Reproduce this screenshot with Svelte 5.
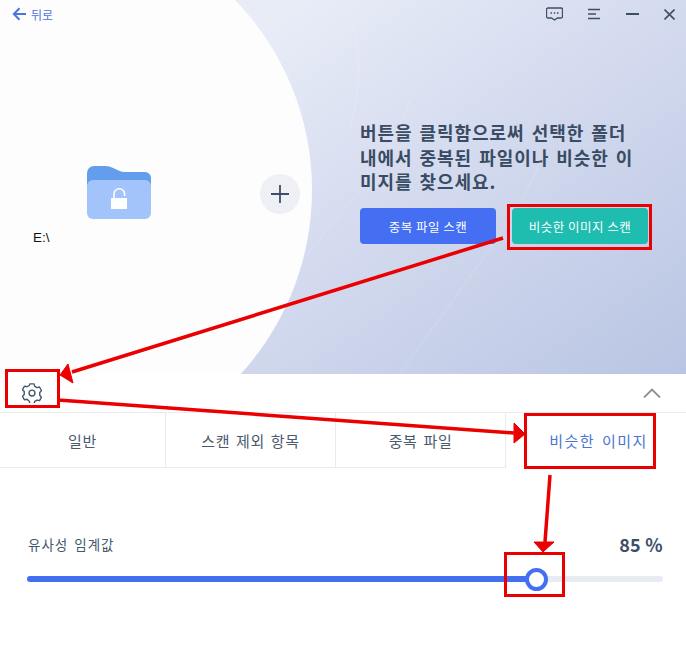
<script>
  const tabs = [
    { label: '일반', active: false },
    { label: '스캔 제외 항목', active: false },
    { label: '중복 파일', active: false },
    { label: '비슷한 이미지', active: true }
  ];
  const percent = 85;
  const sliderPosition = 80.05;
</script>

<div class="page">
  <section class="hero">
    <div class="circle"></div>
    <svg class="streaks" viewBox="0 0 686 374" fill="none" stroke="#ffffff" stroke-opacity="0.16">
      <path d="M305 258 C345 205 385 170 410 100" />
      <path d="M400 374 C450 300 520 220 545 150" />
      <path d="M345 0 C365 50 360 90 350 130" />
    </svg>

    <header class="topbar">
      <div class="back">
        <svg width="15" height="14" viewBox="0 0 15 14" fill="none" stroke="#4a75e0" stroke-width="2">
          <path d="M14 7H2M7.500 1.200 1.800 7l5.700 5.800" />
        </svg>
        <span>뒤로</span>
      </div>
      <div class="actions">
        <svg width="17" height="14" viewBox="0 0 17 14" fill="none" stroke="#3d4f66" stroke-width="1.300">
          <path d="M2 1h13a1.500 1.500 0 0 1 1.500 1.500v7A1.500 1.500 0 0 1 15 11h-3.500l-3 2-3-2H2A1.500 1.500 0 0 1 .5 9.500v-7A1.500 1.500 0 0 1 2 1z" />
          <path d="M4.500 6H6M7.800 6h1.500M11 6h1.500" stroke-width="1.600" />
        </svg>
        <svg width="13" height="12" viewBox="0 0 13 12" fill="none" stroke="#3d4f66" stroke-width="1.500">
          <path d="M0 1.500h12M0 6h8M0 10.500h12" />
        </svg>
        <svg width="13" height="12" viewBox="0 0 13 12" fill="none" stroke="#3d4f66" stroke-width="2">
          <path d="M0 6h13" />
        </svg>
        <svg width="11" height="11" viewBox="0 0 11 11" fill="none" stroke="#3d4f66" stroke-width="1.600">
          <path d="M.5.500l10 10M10.500.500l-10 10" />
        </svg>
      </div>
    </header>

    <div class="hero-body">
      <div class="pickers">
        <div class="folder-card">
          <svg class="folder" width="64" height="54" viewBox="0 0 64 54">
            <path d="M0 8a7 7 0 0 1 7-7h11c9 0 12 6 20 6h20a6 6 0 0 1 6 6v14H0z" fill="#659ded" />
            <path d="M6 15h52a6 6 0 0 1 6 6v27a6 6 0 0 1-6 6H6a6 6 0 0 1-6-6V21a6 6 0 0 1 6-6z" fill="#a3c4fa" />
            <rect x="24" y="33" width="16" height="11" fill="#fff" />
            <path d="M27 33v-4a5.300 5.300 0 0 1 10.600 0v2" fill="none" stroke="#fff" stroke-width="1.600" />
          </svg>
          <span class="drive">E:\</span>
        </div>
        <button class="add" aria-label="추가">
          <svg width="18" height="18" viewBox="0 0 18 18" fill="none" stroke="#3d4f66" stroke-width="1.800">
            <path d="M9 0v18M0 9h18" />
          </svg>
        </button>
      </div>

      <div class="intro">
        <h1>버튼을 클릭함으로써 선택한 폴더<br />내에서 중복된 파일이나 비슷한 이<br />미지를 찾으세요.</h1>
        <div class="buttons">
          <button class="scan blue">중복 파일 스캔</button>
          <button class="scan teal">비슷한 이미지 스캔</button>
        </div>
      </div>
    </div>
  </section>

  <section class="settings">
    <div class="settings-bar">
      <svg width="20" height="20" viewBox="0 0 24 24" fill="none" stroke="#46586e" stroke-width="1.700" stroke-linejoin="round">
        <path d="M9.600 1.500h4.800l.9 3 2.700 1.500 3-.7 2.400 4.200-2.100 2.300v3.400l2.100 2.300-2.400 4.200-3-.7-2.700 1.500-.9 3H9.600l-.9-3L6 20l-3 .7L.6 16.500l2.100-2.300v-3.400L.6 8.500 3 4.300l3 .7 2.700-1.500z" transform="translate(0 -.500)" />
        <circle cx="12" cy="12" r="3.500" />
      </svg>
      <svg width="18" height="10" viewBox="0 0 18 10" fill="none" stroke="#8d8f92" stroke-width="1.800">
        <path d="M1 9.500 9 1.500l8 8" />
      </svg>
    </div>

    <nav class="tabs">
      {#each tabs as tab}
        <div class="tab" class:active={tab.active}>{tab.label}</div>
      {/each}
    </nav>

    <div class="threshold">
      <div class="threshold-head">
        <span class="label">유사성 임계값</span>
        <span class="value">{percent} %</span>
      </div>
      <div class="track">
        <div class="fill" style="width: {sliderPosition}%">
          <span class="thumb"></span>
        </div>
      </div>
    </div>
  </section>

  <svg class="marks" width="686" height="651" viewBox="0 0 686 651" fill="none" stroke="#ea0000" stroke-width="3">
    <rect x="508.500" y="205.500" width="142" height="43" />
    <rect x="6.500" y="370.500" width="52" height="36" />
    <rect x="525.500" y="414.500" width="129" height="53" />
    <rect x="505.500" y="553.500" width="58" height="42" />
    <path d="M503 238 72 372M58 400 514 433M550 475 545 542" stroke-width="3.500" />
    <path d="M60 375 68 364 73 383z" fill="#ea0000" stroke-width="1" />
    <path d="M525 434 514 423 514 443z" fill="#ea0000" stroke-width="1" />
    <path d="M543 552 534 542 554 542z" fill="#ea0000" stroke-width="1" />
  </svg>
</div>

<style>
  :global(body) {
    margin: 0;
    background: #fff;
  }

  .page {
    position: relative;
    width: 686px;
    height: 651px;
    overflow: hidden;
    font-family: "Noto Sans CJK KR", "Noto Sans", sans-serif;
    color: #3d4f66;
  }

  .hero {
    position: relative;
    height: 374px;
    overflow: hidden;
    background: linear-gradient(145deg, #e8ecf7 25%, #d2d9ee 60%, #b9c5e3 100%);
  }

  .circle {
    position: absolute;
    left: -234px;
    top: -83px;
    width: 546px;
    height: 546px;
    border-radius: 50%;
    background: #fdfdfe;
  }

  .streaks {
    position: absolute;
    inset: 0;
  }

  .topbar {
    position: relative;
    display: flex;
    justify-content: space-between;
    align-items: center;
    height: 28px;
    padding: 0 11px 0 12px;
  }

  .back {
    display: flex;
    align-items: center;
    gap: 4px;
    font-size: 12px;
    color: #4a75e0;
  }

  .actions {
    display: flex;
    align-items: center;
    gap: 25px;
  }

  .hero-body {
    position: relative;
    display: flex;
    padding-top: 92px;
  }

  .pickers {
    display: flex;
    width: 360px;
    align-items: flex-start;
  }

  .folder-card {
    position: relative;
    margin: 45px 0 0 87px;
    height: 90px;
    width: 173px;
  }

  .folder {
    display: block;
  }

  .drive {
    position: absolute;
    left: -54px;
    top: 65px;
    font: 13.500px "Liberation Sans", sans-serif;
    color: #111;
  }

  .add {
    display: flex;
    align-items: center;
    justify-content: center;
    width: 40px;
    height: 40px;
    margin-top: 54px;
    padding: 0;
    border: 0;
    border-radius: 50%;
    background: #eef0f5;
  }

  .intro h1 {
    margin: 0;
    font-size: 18px;
    font-weight: 700;
    line-height: 24.500px;
    letter-spacing: 0.950px;
    word-spacing: 2px;
    color: #3a4c63;
    white-space: nowrap;
  }

  .buttons {
    display: flex;
    gap: 16px;
    margin-top: 14.500px;
  }

  .scan {
    width: 136px;
    height: 36px;
    padding: 0;
    border: 0;
    border-radius: 4px;
    font: inherit;
    font-size: 12.500px;
    letter-spacing: 0.500px;
    color: #fff;
  }

  .blue {
    background: #446ff2;
  }

  .teal {
    background: #1fbcb0;
  }

  .settings-bar {
    display: flex;
    justify-content: space-between;
    align-items: center;
    height: 38px;
    padding: 0 25px 0 22px;
    border-bottom: 1px solid #e8ebf0;
  }

  .tabs {
    display: flex;
    height: 55px;
  }

  .tab {
    display: flex;
    align-items: center;
    justify-content: center;
    width: 170px;
    box-sizing: border-box;
    font-size: 15px;
    letter-spacing: 0.600px;
    word-spacing: 2px;
    color: #4a5a6e;
    border-right: 1px solid #e8ebf0;
    border-bottom: 1px solid #e8ebf0;
  }

  .tab:first-child {
    width: 166px;
  }

  .tab.active {
    width: 180px;
    padding-left: 5px;
    border: 0;
    color: #4a75d0;
    letter-spacing: 1.500px;
  }

  .threshold {
    padding: 63px 23px 0 27px;
  }

  .threshold-head {
    display: flex;
    justify-content: space-between;
    align-items: center;
    height: 26px;
  }

  .label {
    padding-left: 1px;
    font-size: 13.500px;
    letter-spacing: 1px;
    word-spacing: 2px;
    color: #46586e;
  }

  .value {
    font-size: 18px;
    font-weight: 700;
    letter-spacing: 0.300px;
    color: #3d4f66;
  }

  .track {
    height: 6px;
    margin-top: 19px;
    border-radius: 3px;
    background: #e8ebf1;
  }

  .fill {
    position: relative;
    height: 100%;
    border-radius: 3px;
    background: #446ff2;
  }

  .thumb {
    position: absolute;
    right: -11.500px;
    top: -8.500px;
    width: 23px;
    height: 23px;
    box-sizing: border-box;
    border: 4px solid #446ff2;
    border-radius: 50%;
    background: #fff;
  }

  .marks {
    position: absolute;
    left: 0;
    top: 0;
    pointer-events: none;
  }
</style>
